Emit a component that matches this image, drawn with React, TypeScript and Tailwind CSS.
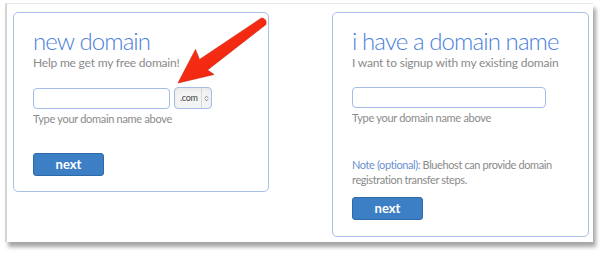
import { ChevronsUpDown } from 'lucide-react';

const FONT = { fontFamily: 'Lato, "Open Sans", sans-serif' };

function NextButton({ className }: { className: string }) {
  return (
    <button
      className={`h-[23px] w-[71px] rounded-[3px] border border-[#2f6aa8] bg-[#3d7fc4] text-[13px] font-bold leading-none text-white ${className}`}
    >
      next
    </button>
  );
}

function Card({
  title,
  subtitle,
  wide,
  note,
  className,
}: {
  title: string;
  subtitle: string;
  wide?: boolean;
  note?: boolean;
  className: string;
}) {
  return (
    <div className={`rounded-[5px] border border-[#a9c0ea] bg-white pl-[19px] pt-[14px] ${className}`}>
      <h2 className="whitespace-nowrap text-[24px] font-light leading-[28px] tracking-[-0.9px] text-[#4a80dc]">
        {title}
      </h2>
      <p className="whitespace-nowrap text-[12px] leading-[16px] tracking-[-0.2px] text-[#8a8a8a]">{subtitle}</p>
      <div className="mt-[16px] flex items-center gap-[4px]">
        <div
          className={`h-[21px] rounded-[4px] border border-[#a5bde6] bg-white ${wide ? 'w-[194px]' : 'w-[137px]'}`}
        />
        {!wide && (
          <div className="flex h-[22px] w-[38px] items-center rounded-[4px] border border-[#a5bde6] bg-[#f4f4f4] shadow-inner">
            <span className="flex-1 pl-[5px] text-[9px] tracking-[-0.3px] text-[#444]">.com</span>
            <span className="flex h-full w-[10px] items-center justify-center border-l border-[#d8d8d8]">
              <ChevronsUpDown size={7} strokeWidth={3} className="text-[#777]" />
            </span>
          </div>
        )}
      </div>
      <p className="mt-[2px] whitespace-nowrap text-[11px] leading-[15px] tracking-[-0.3px] text-[#8a8a8a]">
        Type your domain name above
      </p>
      {note ? (
        <>
          <p className="mt-[32px] whitespace-nowrap text-[11px] leading-[15px] tracking-[-0.4px] text-[#8a8a8a]">
            <span className="text-[#6a8fd0]">Note (optional):</span> Bluehost can provide domain
            <br />
            registration transfer steps.
          </p>
          <NextButton className="mt-[10px]" />
        </>
      ) : (
        <NextButton className="mt-[27px]" />
      )}
    </div>
  );
}

export default function App() {
  return (
    <div className="h-[256px] w-[600px] overflow-hidden bg-white" style={FONT}>
      <div className="relative ml-[5px] mt-[3px] h-[239px] w-[588px] border-l-2 border-t border-l-[#d6d6d6] border-t-[#e6e6e6] bg-white shadow-[3px_5px_4px_rgba(0,0,0,0.35)]">
        <div className="flex items-start gap-[63px] pl-[6px] pt-[8px]">
          <Card className="h-[180px] w-[256px]" title="new domain" subtitle="Help me get my free domain!" />
          <Card
            className="h-[225px] w-[257px]"
            title="i have a domain name"
            subtitle="I want to signup with my existing domain"
            wide
            note
          />
        </div>
        <svg className="pointer-events-none absolute left-[-7px] top-[-4px]" width="600" height="256">
          <defs>
            <linearGradient id="arrowFill" x1="0" y1="0" x2="1" y2="1">
              <stop offset="0" stopColor="#ff3a1c" />
              <stop offset="1" stopColor="#e81a08" />
            </linearGradient>
          </defs>
          <path
            d="M178,83 L195.5,49.5 L199.5,59.5 L261.5,18 Q267,18.5 266,24.5 L207.5,70 L214,74.5 Z"
            fill="url(#arrowFill)"
            stroke="#d01a08"
            strokeWidth="0.6"
            strokeLinejoin="round"
          />
        </svg>
      </div>
    </div>
  );
}
